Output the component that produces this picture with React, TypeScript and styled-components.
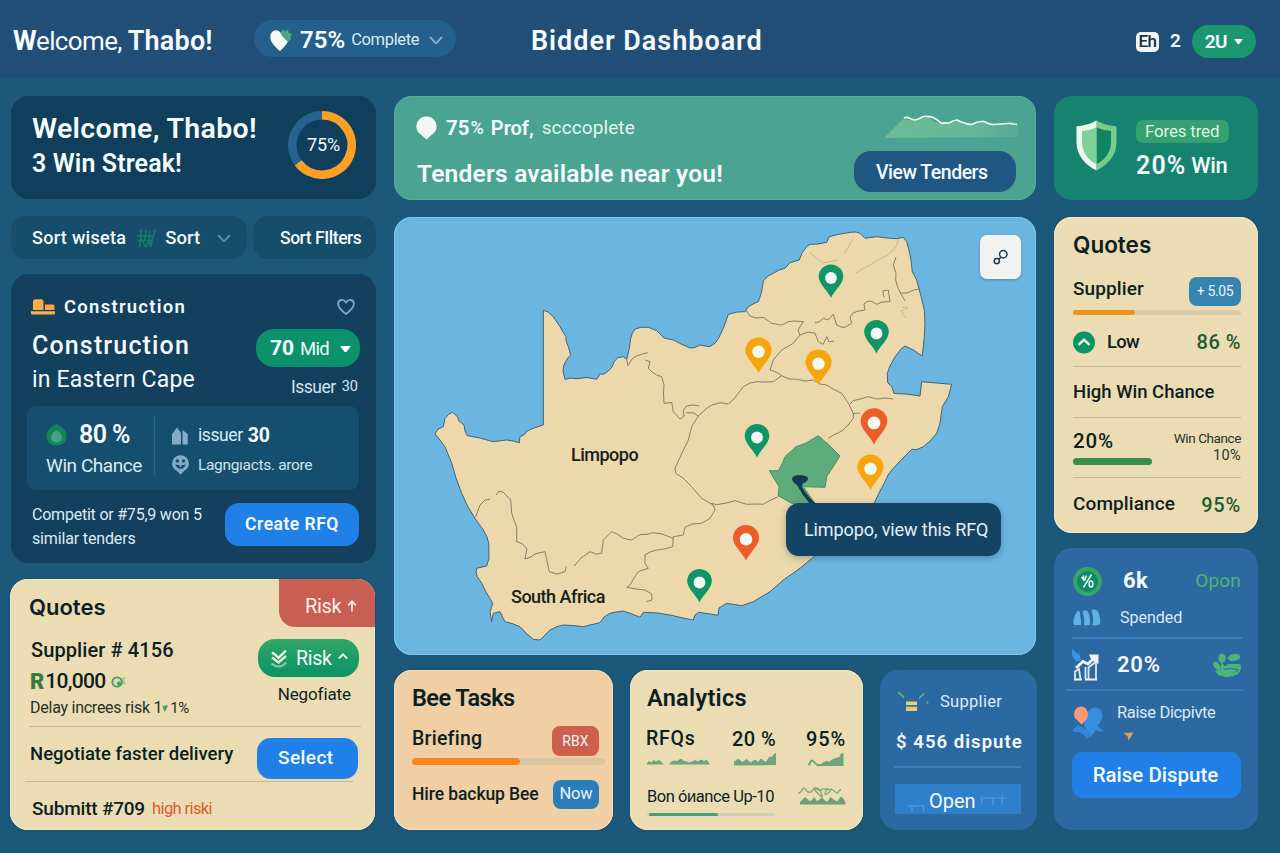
import React from "react";
import styled, { createGlobalStyle, css } from "styled-components";

const color = {
  page: "#1b587a",
  ink: "#0d1f22",
  white: "#f4fafd",
  soft: "#cfe2ee",
  cream: "#ecdcb3",
  rule: "#c3b995",
  blue: "#2080e8",
};

const GlobalStyle = createGlobalStyle`
  * { box-sizing: border-box; }
  html, body { margin: 0; padding: 0; }
  body { width: 1280px; height: 853px; overflow: hidden; background: ${color.page};
    font-family: Roboto, "Liberation Sans", sans-serif; color: ${color.white}; }
  button { font: inherit; border: 0; padding: 0; color: inherit; }
  svg { display: block; flex: none; }
`;

/* ---------- text ---------- */

type TextProps = { $size: number; $weight?: number; $track?: number; $tone?: string; $left?: number };

const Text = styled.span<TextProps>`
  display: block;
  flex: none;
  white-space: pre;
  font-size: ${(p) => p.$size}px;
  line-height: 1.2;
  font-weight: ${(p) => p.$weight ?? 400};
  letter-spacing: ${(p) => p.$track ?? 0}px;
  margin-left: ${(p) => p.$left ?? 0}px;
  ${(p) => p.$tone && css`color: ${p.$tone};`}
`;

const CardTitle = styled.h2<{ $track?: number; $size?: number; $face?: string }>`
  margin: 0;
  font-family: ${(p) => p.$face ?? "Roboto"}, sans-serif;
  font-size: ${(p) => p.$size ?? 23.5}px;
  line-height: 28px;
  font-weight: 600;
  letter-spacing: ${(p) => p.$track ?? 0}px;
  color: ${color.ink};
`;

/* ---------- page frame ---------- */

const Page = styled.div`
  width: 1280px;
  height: 853px;
  display: flex;
  flex-direction: column;
  background: ${color.page};
`;

const Header = styled.header`
  height: 78px;
  flex: none;
  display: grid;
  grid-template-columns: 254px 277px 605px 1fr;
  align-items: center;
  padding: 5px 0 0;
  background: linear-gradient(#224f76, #204e78);
`;

const Greeting = styled.div`
  display: flex;
  align-items: center;
  padding-left: 13px;
`;

const ProgressPill = styled.button`
  width: 202px;
  height: 37px;
  margin-top: -6px;
  border-radius: 19px;
  background: #25608c;
  display: flex;
  align-items: center;
  padding: 3px 0 0 16px;
`;

const HeaderTools = styled.div`
  display: flex;
  align-items: center;
`;

const LanguageBadge = styled.div`
  width: 23px;
  height: 20px;
  border-radius: 5px;
  background: #f2f6f7;
  display: flex;
  align-items: center;
  justify-content: center;
  color: #17303a;
`;

const AccountPill = styled.button`
  width: 64px;
  height: 33px;
  margin-left: 11px;
  border-radius: 17px;
  background: #1b9671;
  display: flex;
  align-items: center;
  padding: 1px 0 0 13px;
`;

const Board = styled.main`
  display: grid;
  grid-template-columns: 365px 642px 204px;
  column-gap: 18px;
  padding: 18px 0 0 11px;
`;

const Column = styled.div`
  display: flex;
  flex-direction: column;
  height: 734px;
`;

const Card = styled.section`
  flex: none;
  border-radius: 18px;
  position: relative;
  overflow: hidden;
  display: flex;
  flex-direction: column;
`;

const CreamCard = styled(Card)`
  background: ${color.cream};
  color: ${color.ink};
  box-shadow: inset 0 0 0 1px #f3e7c6, 0 0 2px #0f4560;
`;

const Row = styled.div<{ $height: number; $top?: number; $left?: number }>`
  flex: none;
  display: flex;
  align-items: center;
  height: ${(p) => p.$height}px;
  margin-top: ${(p) => p.$top ?? 0}px;
  padding-left: ${(p) => p.$left ?? 0}px;
`;

const Rule = styled.hr<{ $tone?: string; $width?: number; $top?: number; $left?: number; $thick?: number }>`
  flex: none;
  border: 0;
  height: ${(p) => p.$thick ?? 1}px;
  width: ${(p) => p.$width ?? 168}px;
  margin: ${(p) => p.$top ?? 0}px 0 0 ${(p) => p.$left ?? 0}px;
  background: ${(p) => p.$tone ?? color.rule};
`;

const Push = styled.span`
  flex: 1;
`;

const Gap = styled.span<{ $width: number }>`
  flex: none;
  width: ${(p) => p.$width}px;
`;

const Track = styled.div<{ $width: number; $height: number; $top?: number; $tone: string }>`
  flex: none;
  width: ${(p) => p.$width}px;
  height: ${(p) => p.$height}px;
  margin-top: ${(p) => p.$top ?? 0}px;
  border-radius: 4px;
  background: ${(p) => p.$tone};
`;

const Fill = styled.div<{ $width: number; $tone: string; $left?: number }>`
  width: ${(p) => p.$width}px;
  margin-left: ${(p) => p.$left ?? 0}px;
  height: 100%;
  border-radius: 4px;
  background: ${(p) => p.$tone};
`;

/* ---------- left column ---------- */

const StreakCard = styled(Card)`
  height: 103px;
  background: #0f3f5a;
  flex-direction: row;
  padding: 17px 20px 0 21px;
  justify-content: space-between;
`;

const StreakText = styled.div`
  display: flex;
  flex-direction: column;
`;

const DonutBox = styled.div`
  width: 68px;
  height: 68px;
  margin-top: -2px;
  display: grid;
  place-items: center;
  & > * { grid-area: 1 / 1; }
`;

const FilterBar = styled.div`
  display: flex;
  gap: 6px;
  height: 43px;
  margin-top: 17px;
`;

const FilterGroup = styled.div<{ $width: number; $pad: number }>`
  width: ${(p) => p.$width}px;
  border-radius: 15px;
  background: #164d6b;
  display: flex;
  align-items: center;
  padding: 1px 0 0 ${(p) => p.$pad}px;
`;

const TenderCard = styled(Card)`
  height: 289px;
  margin-top: 15px;
  background: #12405d;
  padding: 20px 17px 0 16px;
`;

const TenderHead = styled.div`
  flex: none;
  display: flex;
  justify-content: space-between;
  height: 86px;
  padding-left: 5px;
`;

const TenderName = styled.div`
  display: flex;
  flex-direction: column;
  padding-top: 9px;
`;

const TenderSide = styled.div`
  display: flex;
  flex-direction: column;
  align-items: flex-end;
`;

const BudgetPill = styled.button`
  width: 104px;
  height: 38px;
  margin-top: 9px;
  margin-right: -1px;
  border-radius: 18px;
  background: #0c926a;
  display: flex;
  align-items: center;
  padding: 2px 0 0 13px;
`;

const ChancePanel = styled.div`
  flex: none;
  width: 332px;
  height: 84px;
  border-radius: 9px;
  background: #164e70;
  display: flex;
`;

const ChanceMain = styled.div`
  width: 128px;
  height: 60px;
  margin-top: 9px;
  border-right: 1px solid #2c6687;
  padding-left: 19px;
`;

const ChanceFacts = styled.div`
  padding: 16px 0 0 17px;
`;

const TenderFoot = styled.div`
  display: flex;
  justify-content: space-between;
  margin-top: 13px;
  padding-left: 5px;
`;

const ActionButton = styled.button<{ $width: number; $height: number; $radius?: number }>`
  flex: none;
  width: ${(p) => p.$width}px;
  height: ${(p) => p.$height}px;
  border-radius: ${(p) => p.$radius ?? 14}px;
  background: ${color.blue};
  color: ${color.white};
  display: flex;
  align-items: center;
  justify-content: center;
`;

const QuotesCard = styled(CreamCard)`
  height: 251px;
  width: 365px;
  margin: 16px 0 0 -1px;
`;

const QuotesHead = styled.div`
  flex: none;
  display: flex;
  justify-content: space-between;
  padding-left: 19px;
  height: 48px;
`;

const RiskTag = styled.div`
  width: 96px;
  height: 48px;
  border-bottom-left-radius: 16px;
  background: #c95e52;
  display: flex;
  align-items: center;
  padding: 6px 0 0 26px;
  color: #fbeee6;
`;

const QuoteBody = styled.div`
  flex: none;
  display: flex;
  justify-content: space-between;
  padding: 0 16px 0 20px;
  height: 99px;
`;

const QuoteLines = styled.div`
  padding-top: 9px;
`;

const QuoteSide = styled.div`
  display: flex;
  flex-direction: column;
  align-items: flex-end;
  padding-top: 12px;
`;

const RiskPill = styled.button`
  width: 101px;
  height: 38px;
  border-radius: 17px;
  background: linear-gradient(#2fa766, #0a9365);
  display: flex;
  align-items: center;
  padding: 2px 0 0 13px;
  color: ${color.white};
`;

/* ---------- centre column ---------- */

const Banner = styled(Card)`
  height: 104px;
  background: #4ba392;
  box-shadow: inset 0 0 0 1px #57aa98;
  flex-direction: row;
  justify-content: space-between;
  padding: 0 20px 0 22px;
`;

const BannerSide = styled.div`
  display: flex;
  flex-direction: column;
  align-items: flex-end;
  padding-top: 17px;
`;

const TendersButton = styled.button`
  width: 162px;
  height: 41px;
  margin-top: 11px;
  border-radius: 17px;
  background: #1f5682;
  display: flex;
  align-items: center;
  padding: 2px 0 0 22px;
`;

const MapCard = styled(Card)`
  height: 438px;
  margin-top: 17px;
  background: #6bb6e0;
  box-shadow: inset 0 0 0 1px #7fc3e8;
`;

const MapButton = styled.button`
  position: absolute;
  right: 15px;
  top: 18px;
  width: 41px;
  height: 44px;
  border-radius: 7px;
  background: #f2f2f0;
  display: grid;
  place-items: center;
  box-shadow: 0 1px 3px rgba(20, 70, 110, 0.4);
`;

const MapTooltip = styled.div`
  position: absolute;
  left: 392px;
  top: 286px;
  width: 215px;
  height: 53px;
  border-radius: 13px;
  background: #144465;
  display: flex;
  align-items: center;
  padding: 1px 0 0 18px;
  box-shadow: 0 2px 7px rgba(20, 50, 80, 0.35);
`;

const BottomRow = styled.div`
  display: grid;
  grid-template-columns: 219px 233px 157px;
  column-gap: 17px;
  margin-top: 15px;
  height: 160px;
`;

const TasksCard = styled(CreamCard)`
  background: #efcfa3;
  box-shadow: inset 0 0 0 1px #f5dfbc, 0 0 2px #0f4560;
  padding: 14px 8px 0 18px;
`;

const AnalyticsCard = styled(CreamCard)`
  padding: 14px 16px 0 17px;
`;

const SupplierCard = styled(Card)`
  background: #2b69a3;
  padding: 17px 14px 0 15px;
`;

const Chip = styled.span<{ $width: number; $height: number; $tone: string }>`
  flex: none;
  width: ${(p) => p.$width}px;
  height: ${(p) => p.$height}px;
  border-radius: 8px;
  background: ${(p) => p.$tone};
  display: flex;
  align-items: center;
  justify-content: center;
  color: #e9f3f8;
`;

const Metrics = styled.div`
  display: grid;
  grid-template-columns: 86px 74px 1fr;
`;

const OpenButton = styled.button`
  width: 126px;
  height: 30px;
  margin-top: 16px;
  background: #307fcb;
  display: flex;
  align-items: center;
  padding: 3px 0 0 13px;
`;

/* ---------- right column ---------- */

const WinCard = styled(Card)`
  height: 104px;
  background: #168370;
  flex-direction: row;
  padding: 24px 0 0 22px;
`;

const WinText = styled.div`
  margin-left: 19px;
`;

const ForecastTag = styled.div`
  width: 93px;
  height: 23px;
  border-radius: 7px;
  background: #35a070;
  display: flex;
  align-items: center;
  padding-left: 9px;
`;

const StatsCard = styled(CreamCard)`
  height: 316px;
  margin-top: 17px;
  padding: 13px 17px 0 19px;
`;

const WinChanceNote = styled.div`
  display: flex;
  flex-direction: column;
  align-items: flex-end;
  gap: 1px;
  padding-top: 4px;
`;

const DisputeCard = styled(Card)`
  height: 282px;
  margin-top: 15px;
  background: #2c69a3;
  padding: 18px 17px 0 18px;
`;

/* ---------- drawings ---------- */

const Chevron = ({ tone = "#8fb3cc", size = 14 }: { tone?: string; size?: number }) => (
  <svg width={size} height={size * 0.64} viewBox="0 0 14 9" fill="none" stroke={tone} strokeWidth="1.9">
    <path d="M1 1l6 6.6L13 1" />
  </svg>
);

const Caret = ({ size = 10 }: { size?: number }) => (
  <svg width={size} height={size * 0.6} viewBox="0 0 10 6" fill="#f4fafd">
    <path d="M1 0h8q1 0 .4.8L5.8 5.5q-.8.9-1.6 0L.6.8Q0 0 1 0z" />
  </svg>
);

const ChevronUp = () => (
  <svg width="10" height="12" viewBox="0 0 10 12" fill="none" stroke="#eaf6ee" strokeWidth="1.8">
    <path d="M.8 5.5L5 1.3l4.2 4.2" />
  </svg>
);

const LeafHeart = () => (
  <svg width="22" height="23" viewBox="0 0 22 23">
    <path d="M10 22C5 18 0 13 .3 7.500C.6 3 4 .8 7.500 1.400C9 1.700 10 3 11 4.500L18.500 11.500C17 15 13.500 19 10 22z" fill="#f4f7f5" />
    <path d="M10.500 3.200l2.400-2.400 1.900 1.600L18 .8l.8 3.200 3 .4-1.300 3 .3 3-3.300 2.300L12 7z" fill="#4fa67e" />
  </svg>
);

const Donut = () => (
  <svg width="68" height="68" viewBox="-34 -34 68 68" fill="none" strokeWidth="8.6">
    <circle r="29.7" stroke="#2a628f" />
    <path d="M0-29.700A29.700 29.700 0 1 1-23.700 17.900" stroke="#fba024" />
  </svg>
);

const WonMark = () => (
  <svg width="19" height="21" viewBox="0 0 19 21" fill="none" stroke="#167b68" strokeWidth="1.7">
    <path d="M4 1L3 19M9 2L7.500 13M3.500 10l5.500 9 3-7 1.500 7L18 1M12.500 3v9M0 8h17M1 12.500h15" />
  </svg>
);

const Bricks = () => (
  <svg width="24" height="16" viewBox="0 0 24 16">
    <path d="M0 12.200h24v2.300q0 1-1 1H1q-1 0-1-1z" fill="#f7b35c" />
    <path d="M2 2.500Q2 .3 5 .3h5q2.500 0 2.500 2.200v8.500H2z" fill="#fbac45" />
    <path d="M14 5.500h8q1.500 0 1.500 1.500v4H14z" fill="#f7a53e" />
  </svg>
);

const HeartOutline = () => (
  <svg width="18" height="18" viewBox="0 0 19 18" fill="none" stroke="#7fa3bd" strokeWidth="2" strokeLinejoin="round">
    <path d="M9.500 16.500C5 13 1.200 9.600 1.200 5.600 1.200 1 7 0 9.500 4.200 12 0 17.800 1 17.800 5.600c0 4-3.800 7.400-8.300 10.900z" />
  </svg>
);

const Sprout = () => (
  <svg width="21" height="22" viewBox="0 0 21 22">
    <path d="M10.500 0C15 1.500 20.500 6 20.500 12.500c0 5.500-4 9-10 9S.5 18 .5 12.500C.5 6 6 1.500 10.500 0z" fill="#148459" />
    <path d="M10.500 6.500c3 1 5.300 3.500 5.300 7 0 3.200-2.200 5-5.300 5s-5.300-1.800-5.300-5c0-3.500 2.300-6 5.300-7z" fill="#45a384" />
  </svg>
);

const Towers = () => (
  <svg width="17" height="18" viewBox="0 0 17 18" fill="#83abc8">
    <path d="M0 17.500V7L5 .5 9 6v11.500z" />
    <path d="M10.500 17.500V3L15 6.500q.8.600.8 2v9z" />
  </svg>
);

const FacePin = () => (
  <svg width="17" height="20" viewBox="0 0 18 21">
    <path d="M9 20.500L5 16.700C2 15.200 0 12.300 0 9a9 8.800 0 0 1 18 0c0 3.300-2 6.200-5 7.700z" fill="#83abc8" />
    <g fill="#164e70">
      <circle cx="5.700" cy="6.200" r="1.900" />
      <circle cx="12.200" cy="6.200" r="1.900" />
      <path d="M3.600 9.800Q9 11.800 14.400 9.800 13.400 14.500 9 14.600 4.600 14.500 3.600 9.800z" />
    </g>
    <path d="M9 3v9.500" stroke="#83abc8" strokeWidth="1.5" />
  </svg>
);

const ArrowUp = () => (
  <svg width="10" height="12" viewBox="0 0 10 12" fill="none" stroke="#fbeee6" strokeWidth="1.7">
    <path d="M5 11.500V1.500M1 5.500L5 1.300l4 4.200" />
  </svg>
);

const DoubleTick = () => (
  <svg width="16" height="20" viewBox="0 0 16 20" fill="none" strokeWidth="2.4">
    <path d="M1 3.500l3.500 2.500 3 2.800 7.500-7.300" stroke="#f1f8ee" />
    <path d="M1 8.500l6.500 5 7.500-6.500" stroke="#e0f0dd" />
    <path d="M.5 14.500q7.500 6.500 15-1" stroke="#84cc9e" strokeWidth="2" />
  </svg>
);

const CoinDot = () => (
  <svg width="16" height="12" viewBox="0 0 16 12">
    <path d="M9 2l6-1-2 4 2 3-5 1z" fill="#9ccb9c" />
    <circle cx="6" cy="6" r="4.700" fill="#d7dcb6" stroke="#4f9a63" strokeWidth="1.8" />
    <circle cx="8" cy="7.500" r="2" fill="#4f9a63" />
  </svg>
);

const MiniLeaf = () => (
  <svg width="6" height="8" viewBox="0 0 6 8">
    <path d="M.3 1.500L2.500 2l3-1.500Q6 4 2.500 7.700 1 5 .3 1.500z" fill="#4f9a63" />
  </svg>
);

const Balloon = () => (
  <svg width="21" height="24" viewBox="0 0 21 24">
    <path d="M10.500 23.500L5.500 19C2 17 .3 13.800.3 10.300a10.200 10 0 0 1 20.400 0c0 3.500-1.700 6.700-5.200 8.700z" fill="#f4f6f3" />
  </svg>
);

const BannerSpark = () => (
  <svg width="132" height="27" viewBox="0 0 132 27" overflow="visible">
    <defs>
      <linearGradient id="spark" x1="0" x2="1">
        <stop offset="0" stopColor="#6fbb96" />
        <stop offset=".65" stopColor="#66b698" />
        <stop offset="1" stopColor="#55aa95" />
      </linearGradient>
    </defs>
    <path d="M0 25L19 6q7 2 12 1 6-4 14-2 6 5 12 5 9 0 14-3 8 3 17 4 9-4 17-2 9 3 16 1 8-2 13 0v14z" fill="url(#spark)" />
    <path d="M20 5q3-1.500 6 .500 4 2 7 1t6-3q5-.500 9 .500 5 2 9 6 5 .500 9-.500 4-2.500 7-2.500 3 1.500 6 2.500 6 2.500 10 1.500 4-2.500 8-2.500 4-.500 6 1.500 4 2 8 1.500l12-1q4-.500 6 .500l4 .500" fill="none" stroke="#eafaf0" strokeWidth="1.7" strokeLinejoin="round" />
  </svg>
);

const Shield = () => (
  <svg width="41" height="51" viewBox="0 0 41 51">
    <path d="M20.500.5Q28 5 40.500 6.500V22C40.500 35 32 45 20.500 50.500z" fill="#74cc8d" />
    <path d="M20.500.5Q13 5 .5 6.500V22C.5 35 9 45 20.500 50.500z" fill="#eef7ee" />
    <path d="M20.500 7.500Q27 10.500 35 11V22c0 9-5 17.500-14.500 22z" fill="#118463" />
    <path d="M20.500 7.500Q14 10.500 6 11V22c0 9 5 17.500 14.500 22z" fill="#7bd196" />
  </svg>
);

const UpBadge = () => (
  <svg width="22" height="23" viewBox="0 0 22 23">
    <circle cx="11" cy="11.500" r="11" fill="#0b9465" />
    <path d="M5.500 13.800L11 8.600l5.500 5.200" fill="none" stroke="#effaf3" strokeWidth="2.3" />
  </svg>
);

const CoinBadge = () => (
  <svg width="30" height="31" viewBox="0 0 30 31">
    <circle cx="14.500" cy="15.500" r="14.400" fill="#36a568" />
    <circle cx="14.500" cy="15.500" r="10.400" fill="#0b8b66" />
    <g fill="none" stroke="#f0faf4" strokeWidth="1.5">
      <path d="M10.500 21.500l8-13M8.500 11l2 2.500v-4M13.500 9.500l-2 5" />
      <ellipse cx="18" cy="18" rx="1.900" ry="3" />
    </g>
  </svg>
);

const Feathers = () => (
  <svg width="28" height="17" viewBox="0 0 28 17" fill="#62b0e2">
    <path d="M1 16Q-1 9 5 1.500q2.500 1 2.300 6 1 4 .5 8.500z" />
    <path d="M11 16.500q1-7-1.300-14Q13 0 15 3q2.500 5 2 13z" />
    <path d="M19.500 16.300q1.500-8-1-15.300Q21-1 24.500 2q4 6 2.300 13.500-3 1.500-7.300.8z" />
  </svg>
);

const GrowthChart = () => (
  <svg width="27" height="32" viewBox="0 0 27 32">
    <path d="M0 0l6 5 1-1 2 7-4 2-5-6z" fill="#3d93de" />
    <path d="M4 19l7-6.500 5 2.500 7-7" fill="none" stroke="#f2f4ef" strokeWidth="3" />
    <path d="M17 5.500h9.500V15l-4-2-4-4z" fill="#f2f4ef" />
    <path d="M3 30.500v-8l4-2.500 1.500 10.500M13.500 30V18M16.500 30V18.500l7.500-6V30" fill="none" stroke="#dbe9f0" strokeWidth="1.8" />
    <path d="M2 30.500h8M13 30.500h12" stroke="#f2f4ef" strokeWidth="1.8" />
  </svg>
);

const Plant = () => (
  <svg width="28" height="25" viewBox="0 0 28 25" fill="#4db37a">
    <ellipse cx="9" cy="5" rx="3.800" ry="4.600" />
    <ellipse cx="21" cy="4.500" rx="6.300" ry="3.500" transform="rotate(-10 21 4.500)" />
    <ellipse cx="4" cy="13" rx="2.800" ry="5" transform="rotate(-38 4 13)" />
    <path d="M8 8l3.500 5h1Q14 11 17 11h9q2 0 2 2.500 0 5-3 7.500-8 4.500-15 2.500-6-1-8-6l6-.5z" />
    <path d="M11 16.500q7-1.500 14 0l-2 2.500" stroke="#2c69a3" strokeWidth="1.2" fill="none" />
  </svg>
);

const Balloons = () => (
  <svg width="32" height="33" viewBox="0 0 32 33">
    <path d="M0 24l6-5 7 4 8-5 5 2 6 5-5 1-3-2-5 7-1-1-3 3-3-4-5-3-5 0z" fill="#3387d8" />
    <path d="M20 29l-8-9C13 10 16 1.500 23.500 1.500c4.500 0 7 4 7 8.500 0 5-5 9-6 12z" fill="#3490df" />
    <path d="M9.500 18.500L5 14C2.500 12 2 9.500 2 8A7 7.500 0 0 1 16 8c0 5-3 7.500-6.500 10.500z" fill="#fc9775" />
  </svg>
);

const OrangeDart = () => (
  <svg width="11" height="9" viewBox="0 0 11 9">
    <path d="M.5 1L10.500.5 5.500 8.500 4.500 4z" fill="#e5a04b" />
  </svg>
);

const Lantern = () => (
  <svg width="32" height="22" viewBox="0 0 32 22">
    <path d="M1 1l6 5.500M22 7.500l5-5M30 12.500l1-2" stroke="#59b27e" strokeWidth="1.7" />
    <rect x="9" y="10.500" width="11" height="3.600" fill="#ded772" />
    <rect x="9" y="15.700" width="11" height="4.300" fill="#e8c677" />
  </svg>
);

const OpenMarks = () => (
  <svg width="28" height="11" viewBox="0 0 28 11" fill="none" stroke="#5797d6" strokeWidth="1.2">
    <path d="M.6 9V3h25M12 3v7M21 0v9" />
  </svg>
);

const LeftMarks = () => (
  <svg width="18" height="7" viewBox="0 0 18 7" fill="none" stroke="#5797d6" strokeWidth="1.2">
    <path d="M0 1h15.500v6M4 1v6" />
  </svg>
);

const Scribble = ({ width, height, d }: { width: number; height: number; d: string }) => (
  <svg width={width} height={height} viewBox={`0 0 ${width} ${height}`} fill="#6fa37c">
    <path d={d} />
  </svg>
);

const WavePair = () => (
  <svg width="49" height="19" viewBox="0 0 49 19">
    <path d="M2 18.500v-2.500l5-5 2.500 2 2 2 2.500-1 2-3 3 4 2-1 3-3 3 4 2.500.500 3-4.500 4 3 2.500 1.500 4-5 2.500 2 2 4v2z" fill="#6f9f79" />
    <path d="M0 7q3 0 4.500-4Q6 1 8 4t5 2q3-4 5-4t4 2-3.500-1 1 4 4 1 3-5 4 0-3 3 2 1.500 3-4 3.500 1.500 4 1.500 3-3" fill="none" stroke="#82a983" strokeWidth="1.4" />
  </svg>
);

const LinkDots = () => (
  <svg width="16" height="16" viewBox="0 0 16 16" fill="none" stroke="#1d3d55" strokeWidth="1.5">
    <circle cx="10.300" cy="5.200" r="3.700" />
    <circle cx="3.800" cy="12" r="2.600" />
    <path d="M5.800 10.200l2-2" />
  </svg>
);

/* ---------- map ---------- */

const COAST =
  "543.3,310.3 548,312 553.3,316.7 560,326.7 563,332 566,336.7 566,341 568.3,346.7 570.7,355 567,359 564,365 563,370.7 565,379.5 570,378 576.7,378.7 587,377.5 596.7,379.3 600,374 604,374 608.3,371 612,367 614,362 617.7,357.7 623.3,356.7 626.7,359.3 629.3,348.3 630.5,339 632.3,333.3 635,329 641,327.3 648.3,327.3 656.7,330.7 660,334 664,338 673.3,340 681,344 690,348 695,347.5 700,345 705,346 710,346.5 715,343.3 718.5,338.5 724,326.7 728.3,314.3 737,312 745,311.7 748.3,306.7 753,304 758.3,301.7 761.7,291.7 763.3,281 768,276 773.3,273.3 779,270 785,268.3 790,262.7 799.3,260 802,253 806.7,246.7 810,244.3 818,244 826.7,242.3 829.3,236.7 838.3,234.3 850,232.3 856,232 860,233.3 865,238.3 876.7,236.7 887,238 896.7,238.7 903.3,237.3 906.7,241.7 909,250 911,260 912.3,271.7 916.7,280 920.7,295 924.3,310 925,323 924.3,336.7 922.3,356 913.3,350 905,346 900.7,349.3 895,357 890,366 887.3,373.3 887.7,382.7 891.7,386.7 894,393.5 906,394 920,396 921.7,381.7 951.7,384.3 948.3,396.7 942.3,406.7 940,423.3 936.7,433.3 930,441 923.3,446.7 917,449.5 911.7,449.3 902,459 893.3,468.3 888,475 885,481.7 879,493 873.3,505 850,530 814,556.7 800,568.3 783.3,580 770,591.7 753.3,601.7 741.7,605.7 726.7,603.3 719,608 718,615.3 707,613.5 698.3,612.3 695,615 693.3,620 683,618 673.3,615.7 658,613 643.3,612.3 640,617.3 632,614 623.3,611 616,612 610,613.3 604,617 600,622.7 592,624.5 583.3,626.7 573,625.5 563.3,625 556,627 550,630 545,635 540,640 533.3,639.3 527,634 520,626.7 512,623.5 505,621.7 502,616 500,611.7 493.3,613.3 491.7,621.7 490,611.7 492.7,603.3 486,592 481.7,583.3 477.3,576.7 476,572 476.7,568.3 486.7,566 489,558.3 488.7,543.3 487,537 483.3,530 475,518.3 468,507 461.7,493.3 456,478 451.7,463.3 445,446.7 440,440 435,434 438,429 443.3,426.7 445,418.3 449,414 452.7,412.3 457.3,416.7 459,421 464,425 465,431 467.3,435.7 480,438 493.3,441.7 506.7,440 513,441 519.5,442.7 519.8,437 525,434 527,431 533.3,428.3 543.3,425";

const BORDERS = [
  "626.7,359 628,365.7 632,359 636.7,355.7 647.7,352.7",
  "645,360 650,361.7 648.3,368.3 652,372 656.7,375 661.7,376.7 664,385 663.5,394 664,403.3 671.7,402.5 673.3,411.7 680,419 684,416 683.3,410 686.7,406 693,405 699.3,406",
  "686.7,412.7 694,413 698.3,416 691.7,426.7 688.3,440 682,453 675,468.3 675.7,473.3 683,478 690,485 701.7,498.3 708,502 713.3,505 715,510 710,518.3 701.7,523.3 692,524 685,527.3 683.3,535 673.3,536.7 672.7,546.7 664,549 656.7,550 650,552 645,555 645,563.3 648.3,568.3 638.3,571.7 634,578 630,585 626.7,587.3 636,589 645,590 651.7,594 652,600 646.7,601.7",
  "698.3,416 706.7,408.3 712,405 720,402.7 728.3,404 734,399 743.3,386.7 750,383 756.7,381.7 765,382 773.3,381.7 781.7,375.7 776,372 770,370 773.3,360 781.7,350 793.3,343.3 800,335 798,330 803.3,321.7 795,321 788.3,321.7 781.7,325 771.7,323.3 763.3,317.3 756,318 750,316 745.7,310",
  "781.7,375.7 789,379 796.7,379.3 805,381 813.3,380 820,384 826.7,385 833,389 841.7,393.3 848.3,403.3 853.3,413.3 853.3,418.3 849,424 843.3,430 838,433 833.3,435 828.3,438.3",
  "850,404 853.3,400.7 860,399 868.3,396.7 876.7,399 885,398 893.3,399",
  "853,413.5 860,413",
  "800,335 808,332 815,333.3 818.3,341.7 823,344.5 827,336.7 829,342 834,341",
  "815,322.7 819,322 823.3,318.3 828,320 833.3,314.3 836.7,325 841,327 845,327.3 851.7,323.3 850,317 853.3,312.7 859,311 865,310 864,304 866.7,301.7 871,301 876.7,304.3 882,302 890,301.7 888.3,290 882.7,291 884,297",
  "896,257 893.3,265 896,273.3 895.7,280 898,288 901,294 905,300.7",
  "900,293 907,293 913.3,290 919.3,289.3",
  "710,503.3 717,504.5 725,503.3 735,500.7 746.7,504.3 755,504 763.3,504.3 771,500 778.3,496.7",
  "475.7,516.7 480,505 485,500 490,499.3",
  "496,495 499,491 503,492 510.7,500 511.7,513.3 514,520 516.7,526.7 516.7,541.7 522,543.5 527,549 525,559 531,557 536,553.5 545,551.7 549.3,571.7 557,574 565,571.7 566,566.7",
  "574,566 581,558 590,551.7 596,554 601.7,553.3 603.3,540 611.7,531.7 617,534 623.3,538.3 631.7,540 640,534.5 646,534.5 653.3,532.7 662,534 673.3,538.3",
];

const PROVINCE =
  "818.3,435.7 829,445 840,456 833,467 826.7,476.7 825,487.3 803.3,486.7 815,503.3 800,505 791.7,503.3 778.3,495.7 779,486.7 769.3,470.7 778.3,470.7 782,464 785,456.7 796,446.7 806,443";

const PINS: { x: number; y: number; tone: string; k?: number }[] = [
  { x: 831, y: 298, tone: "#0f9566" },
  { x: 876.5, y: 353.5, tone: "#0f9566" },
  { x: 757, y: 457.5, tone: "#0f9566" },
  { x: 699.5, y: 602.5, tone: "#0f9566" },
  { x: 758.5, y: 373, tone: "#f6a50b", k: 1.06 },
  { x: 818.5, y: 385, tone: "#f6a50b", k: 1.06 },
  { x: 870.5, y: 490, tone: "#f6a50b", k: 1.06 },
  { x: 874, y: 444.5, tone: "#ec5d29", k: 1.08 },
  { x: 746, y: 560.5, tone: "#ec5d29", k: 1.06 },
];

const MapLabel = styled.text`
  font-size: 18px;
  font-weight: 500;
  letter-spacing: -0.5px;
  fill: #14211f;
`;

const TenderMap = () => (
  <svg width="642" height="438" viewBox="394 217 642 438">
    <polygon points={COAST} fill="#edd8ab" stroke="#3f6474" strokeWidth="1" strokeLinejoin="round" />
    <g fill="none" stroke="#76775f" strokeWidth=".9" strokeLinejoin="round">
      {BORDERS.map((points) => (
        <polyline key={points} points={points} />
      ))}
    </g>
    <g fill="none" stroke="#c9b78e" strokeWidth="1">
      <path d="M810 253l13 10 15-3M853 239l-9 15M898 239q0 12-18 20l-24 14M902 307l6 1-7 3 5 7" />
    </g>
    <polygon points={PROVINCE} fill="#5cad79" stroke="#47856a" strokeWidth=".9" />
    <path d="M792 479q0-4 9-4 8 1 7 4-1 3-5 4l-1 4q5 9 14 17h-6Q802 495 797 485q-4-2-5-6z" fill="#133a52" />
    {PINS.map((pin) => (
      <g key={`${pin.x}-${pin.y}`} transform={`translate(${pin.x} ${pin.y}) scale(${pin.k ?? 1})`}>
        <path d="M0 0C-3-7-12.300-14-12.300-21.500a12.300 12 0 0 1 24.600 0C12.300-14 3-7 0 0z" fill={pin.tone} />
        <circle cy="-20" r="5.900" fill="#f4f8f3" />
      </g>
    ))}
    <MapLabel x="571" y="460.5">Limpopo</MapLabel>
    <MapLabel x="511" y="603">South Africa</MapLabel>
  </svg>
);

/* ---------- page ---------- */

export default function App() {
  return (
    <Page>
      <GlobalStyle />
      <Header>
        <Greeting>
          <Text $size={27} $weight={700} $track={-0.6}>W</Text>
          <Text $size={26} $track={-0.65}>elcome,</Text>
          <Text $size={27} $weight={600} $track={0.2} $left={6}>Thabo!</Text>
        </Greeting>
        <ProgressPill>
          <LeafHeart />
          <Text $size={24} $weight={600} $left={8}>75%</Text>
          <Text $size={16.5} $track={-0.35} $left={6} $tone="#d9e9f4">Complete</Text>
          <Gap $width={10} />
          <Chevron tone="#86aecb" />
        </ProgressPill>
        <Text $size={27} $weight={600} $track={0.97}>Bidder Dashboard</Text>
        <HeaderTools>
          <LanguageBadge><Text $size={17} $weight={500} $track={-0.5}>Eh</Text></LanguageBadge>
          <Text $size={19} $weight={600} $left={11}>2</Text>
          <AccountPill>
            <Text $size={19} $weight={600} $track={-0.6}>2U</Text>
            <Gap $width={7} />
            <Caret size={9} />
          </AccountPill>
        </HeaderTools>
      </Header>

      <Board>
        <Column>
          <StreakCard>
            <StreakText>
              <Row $height={32}><Text $size={28.5} $weight={600} $track={0.33}>Welcome, Thabo!</Text></Row>
              <Row $height={32} $top={3}><Text $size={25} $weight={600} $track={0.12}>3 Win Streak!</Text></Row>
            </StreakText>
            <DonutBox>
              <Donut />
              <Text $size={18} $weight={400} $track={-0.2} $left={3}>75%</Text>
            </DonutBox>
          </StreakCard>

          <FilterBar>
            <FilterGroup $width={236} $pad={21}>
              <Text $size={18} $weight={500} $track={0.3}>Sort wiseta</Text>
              <Gap $width={11} />
              <WonMark />
              <Text $size={18.5} $weight={500} $left={9}>Sort</Text>
              <Gap $width={17} />
              <Chevron tone="#5d8dad" />
            </FilterGroup>
            <FilterGroup $width={123} $pad={27}>
              <Text $size={17.5} $weight={500} $track={-0.45}>Sort FIlters</Text>
            </FilterGroup>
          </FilterBar>

          <TenderCard>
            <Row $height={26} $left={4}>
              <Bricks />
              <Text $size={18.5} $weight={600} $track={1.25} $left={9}>Construction</Text>
              <Push />
              <HeartOutline />
              <Gap $width={4} />
            </Row>
            <TenderHead>
              <TenderName>
                <Row $height={34}><Text $size={25} $weight={500} $track={1.15}>Construction</Text></Row>
                <Row $height={34}><Text $size={23} $track={0.2}>in Eastern Cape</Text></Row>
              </TenderName>
              <TenderSide>
                <BudgetPill>
                  <Text $size={21} $weight={700} $left={1}>70</Text>
                  <Text $size={18.5} $track={-0.8} $left={6}>Mid</Text>
                  <Gap $width={11} />
                  <Caret size={11} />
                </BudgetPill>
                <Row $height={24} $top={8}>
                  <Text $size={17.5} $track={-0.5} $tone="#d5e4ee">Issuer</Text>
                  <Text $size={14.5} $left={6} $tone="#d5e4ee">30</Text>
                  <Gap $width={1} />
                </Row>
              </TenderSide>
            </TenderHead>
            <ChancePanel>
              <ChanceMain>
                <Row $height={40}>
                  <Sprout />
                  <Text $size={25} $weight={600} $track={-0.6} $left={12}>80 %</Text>
                </Row>
                <Row $height={22}><Text $size={19} $track={-0.45} $tone="#dcebf4">Win Chance</Text></Row>
              </ChanceMain>
              <ChanceFacts>
                <Row $height={27}>
                  <Towers />
                  <Text $size={17.5} $track={-0.4} $left={9} $tone="#dcebf4">issuer</Text>
                  <Text $size={19.5} $weight={700} $track={-0.2} $left={5}>30</Text>
                </Row>
                <Row $height={32}>
                  <FacePin />
                  <Text $size={15.5} $track={-0.33} $left={9} $tone={color.soft}>Lagngıacts. arore</Text>
                </Row>
              </ChanceFacts>
            </ChancePanel>
            <TenderFoot>
              <div>
                <Row $height={24}><Text $size={16} $track={-0.22} $tone="#dcebf4">Competit or #75,9 won 5</Text></Row>
                <Row $height={24}><Text $size={16} $track={-0.15} $tone="#dcebf4">similar tenders</Text></Row>
              </div>
              <ActionButton $width={134} $height={43}><Text $size={17.5} $weight={600} $track={0.5}>Create RFQ</Text></ActionButton>
            </TenderFoot>
          </TenderCard>

          <QuotesCard>
            <QuotesHead>
              <Row $height={28} $top={14}><CardTitle $size={22} $face="Inter">Quotes</CardTitle></Row>
              <RiskTag>
                <Text $size={20} $track={-0.3}>Risk</Text>
                <Gap $width={6} />
                <ArrowUp />
              </RiskTag>
            </QuotesHead>
            <QuoteBody>
              <QuoteLines>
                <Row $height={28} $left={1}><Text $size={20} $weight={500} $track={0.1}>Supplier # 4156</Text></Row>
                <Row $height={32} $top={2}>
                  <Text $size={22} $weight={900} $tone="#3c7a45">R</Text>
                  <Text $size={21} $weight={500} $track={-0.7} $left={1}>10,000</Text>
                  <Gap $width={5} />
                  <CoinDot />
                </Row>
                <Row $height={22} $top={-1}>
                  <Text $size={16} $track={-0.25} $tone="#24302d">Delay increes risk 1</Text>
                  <MiniLeaf />
                  <Text $size={15} $track={-0.4} $left={2} $tone="#24302d">1%</Text>
                </Row>
              </QuoteLines>
              <QuoteSide>
                <RiskPill>
                  <DoubleTick />
                  <Text $size={19.5} $track={-0.3} $left={9}>Risk</Text>
                  <Gap $width={6} />
                  <ChevronUp />
                </RiskPill>
                <Row $height={24} $top={5}><Text $size={17} $track={-0.1}>Negofiate</Text><Gap $width={8} /></Row>
              </QuoteSide>
            </QuoteBody>
            <Rule $width={332} $left={19} />
            <Row $height={54} $left={20}>
              <Text $size={18.5} $weight={500}>Negotiate faster delivery</Text>
              <Gap $width={24} />
              <Row $height={54} $top={8}><ActionButton $width={101} $height={41}><Text $size={19} $weight={500} $track={0.4} $left={-4}>Select</Text></ActionButton></Row>
            </Row>
            <Rule $width={328} $left={15} />
            <Row $height={46} $top={4} $left={22}>
              <Text $size={19} $weight={500} $track={-0.2}>Submitt #709</Text>
              <Text $size={16.5} $track={-0.6} $left={7} $tone="#dc5a34">high riski</Text>
            </Row>
          </QuotesCard>
        </Column>

        <Column>
          <Banner>
            <div>
              <Row $height={32} $top={16}>
                <Balloon />
                <Text $size={20.5} $weight={700} $left={9}>75</Text>
                <Text $size={18} $weight={500} $left={1}>%</Text>
                <Text $size={20} $weight={600} $left={7}>Prof,</Text>
                <Text $size={19} $track={0.1} $left={8} $tone="#e2f6ee">scccoplete</Text>
              </Row>
              <Row $height={34} $top={13} $left={1}>
                <Text $size={24.5} $weight={600} $track={0.23}>Tenders available near you!</Text>
              </Row>
            </div>
            <BannerSide>
              <BannerSpark />
              <TendersButton><Text $size={19.5} $weight={500} $track={-0.5}>View Tenders</Text></TendersButton>
            </BannerSide>
          </Banner>

          <MapCard>
            <TenderMap />
            <MapButton><LinkDots /></MapButton>
            <MapTooltip><Text $size={18} $track={-0.1} $tone="#e4eef5">Limpopo, view this RFQ</Text></MapTooltip>
          </MapCard>

          <BottomRow>
            <TasksCard>
              <CardTitle $track={-0.55}>Bee Tasks</CardTitle>
              <Row $height={32} $top={11}>
                <Text $size={19.5} $weight={500} $track={0.25}>Briefing</Text>
                <Push />
                <Row $height={32} $top={4}><Chip $width={47} $height={30} $tone="#cc604d"><Text $size={14} $track={0.2}>RBX</Text></Chip></Row>
                <Gap $width={6} />
              </Row>
              <Track $width={193} $height={7} $top={3} $tone="#dcc6a0"><Fill $width={108} $tone="#f58820" /></Track>
              <Row $height={30} $top={14}>
                <Text $size={17.5} $weight={500} $track={-0.08}>Hire backup Bee</Text>
                <Push />
                <Chip $width={46} $height={29} $tone="#2b7cba"><Text $size={16.5} $track={-0.2}>Now</Text></Chip>
                <Gap $width={6} />
              </Row>
            </TasksCard>

            <AnalyticsCard>
              <CardTitle $track={0.3}>Analytics</CardTitle>
              <Metrics>
                <div>
                  <Row $height={32} $top={11}><Text $size={19.5} $weight={500} $track={0.8} $left={-1}>RFQs</Text></Row>
                  <Row $height={14}><Scribble width={64} height={6} d="M-1 5.500l3-3.500 2.500 1.500 2-2.500 2.500 1.500 3-1.500 2 1.500 3 3zM22 5.500l2-2.500 3-1.500 3 .500 4-2.500 3 2.500 3 .500 2 1 3-1 3-1.500 3 1.500 3-2 3 1.500 3-1 3 4.500z" /></Row>
                </div>
                <div>
                  <Row $height={32} $top={11}><Text $size={20} $weight={500} $track={0.4} $left={-1}>20 %</Text></Row>
                  <Row $height={14} $top={-3}><Scribble width={43} height={13} d="M1 12.500v-4l4-2.500 2 1 2.500 2 4-3 4 3.500 4.500-3 3 2.500 3-3.500 5 3.500 3-5 3-.500 4-4.500v13z" /></Row>
                </div>
                <div>
                  <Row $height={32} $top={11}><Text $size={20} $weight={500} $track={0.9} $left={-1}>95%</Text></Row>
                  <Row $height={14} $top={-3}><Scribble width={38} height={13} d="M.5 12l3-5 2-.500 5 4.500 4 0 2-2 3-1 3 .500 3-2.500 5-1.500 2-.500 1-3 3-1v13H10l-5-4.500-2.500 4z" /></Row>
                </div>
              </Metrics>
              <Row $height={30} $top={13}>
                <Text $size={16.5} $track={-0.45}>Bon óᴎance Up-10</Text>
                <Push />
                <Row $height={30} $top={-4}><WavePair /></Row>
              </Row>
              <Track $width={128} $height={3} $top={1} $tone="#d5cfa9"><Fill $width={69} $left={2} $tone="#44a070" /></Track>
            </AnalyticsCard>

            <SupplierCard>
              <Row $height={30}>
                <Gap $width={2} />
                <Lantern />
                <Text $size={16.5} $track={0.3} $left={11} $tone="#dfecf6">Supplier</Text>
              </Row>
              <Row $height={28} $top={11} $left={1}><Text $size={18.5} $weight={600} $track={1.05}>$ 456 dispute</Text></Row>
              <Rule $width={127} $top={10} $left={-1} $thick={2} $tone="#3a7fbe" />
              <OpenButton>
                <Row $height={30} $top={15}><LeftMarks /></Row>
                <Text $size={20} $left={3}>Open</Text>
                <Gap $width={5} />
                <OpenMarks />
              </OpenButton>
            </SupplierCard>
          </BottomRow>
        </Column>

        <Column>
          <WinCard>
            <Shield />
            <WinText>
              <ForecastTag><Text $size={17} $track={-0.2} $tone="#dff5e6">Fores tred</Text></ForecastTag>
              <Row $height={32} $top={7}>
                <Text $size={25} $weight={600} $track={1.1}>20%</Text>
                <Text $size={22} $weight={500} $track={-0.4} $left={5}>Win</Text>
              </Row>
            </WinText>
          </WinCard>

          <StatsCard>
            <Row $height={30}><CardTitle $size={22.5} $face="Inter">Quotes</CardTitle></Row>
            <Row $height={32} $top={13}>
              <Text $size={19} $weight={500} $track={0.1}>Supplier</Text>
              <Push />
              <Row $height={32} $top={5}><Chip $width={52} $height={29} $tone="#3784ae"><Text $size={14} $track={-0.4}>+ 5.05</Text></Chip></Row>
            </Row>
            <Track $width={168} $height={5} $top={5} $tone="#d9cda7"><Fill $width={62} $tone="#f0921f" /></Track>
            <Row $height={34} $top={10}>
              <UpBadge />
              <Row $height={34} $top={1}><Text $size={18.5} $weight={500} $track={-0.7} $left={12}>Low</Text></Row>
              <Push />
              <Text $size={20} $weight={500} $track={0.5} $tone="#1b5b33">86 %</Text>
            </Row>
            <Rule $top={7} />
            <Row $height={50}><Text $size={18.5} $weight={500}>High Win Chance</Text></Row>
            <Rule />
            <Row $height={39} $top={8}>
              <div>
                <Row $height={28} $top={1}><Text $size={20.5} $weight={500} $track={0.9}>20%</Text></Row>
                <Track $width={86} $height={7} $top={3} $tone="transparent"><Fill $width={79} $tone="#3a8d49" /></Track>
              </div>
              <Push />
              <WinChanceNote>
                <Text $size={13.5} $track={-0.4} $tone="#24332e">Win Chance</Text>
                <Text $size={14.5} $track={0.4} $tone="#24332e">10%</Text>
              </WinChanceNote>
            </Row>
            <Rule $top={12} />
            <Row $height={53}>
              <Text $size={19} $weight={500} $track={0.1}>Compliance</Text>
              <Push />
              <Text $size={20} $weight={500} $track={0.8} $tone="#1b5b33">95%</Text>
            </Row>
          </StatsCard>

          <DisputeCard>
            <Row $height={31}>
              <Gap $width={1} />
              <CoinBadge />
              <Text $size={22} $weight={700} $track={0.5} $left={20}>6k</Text>
              <Push />
              <Text $size={19} $track={0.2} $tone="#4fb36e">Opon</Text>
            </Row>
            <Row $height={28} $top={6}>
              <Gap $width={1} />
              <Feathers />
              <Row $height={28} $top={2}><Text $size={16} $left={19} $tone="#dbe9f5">Spended</Text></Row>
            </Row>
            <Rule $top={6} $thick={2} $tone="#3a7fc2" $width={170} />
            <Row $height={50} $top={1}>
              <GrowthChart />
              <Text $size={22} $weight={600} $track={0.8} $left={18}>20%</Text>
              <Push />
              <Plant />
            </Row>
            <Rule $top={-1} $thick={2} $tone="#3879b9" $width={178} $left={-6} />
            <Row $height={62}>
              <Balloons />
              <div>
                <Row $height={24} $top={2}><Text $size={16.5} $track={-0.35} $left={13} $tone="#dbe9f5">Raise Dicpivte</Text></Row>
                <Row $height={18} $top={2} $left={19}><OrangeDart /></Row>
              </div>
            </Row>
            <Row $height={46} $top={-1}>
              <ActionButton $width={169} $height={46} $radius={11}><Text $size={20.5} $weight={500} $left={-2}>Raise Dispute</Text></ActionButton>
            </Row>
          </DisputeCard>
        </Column>
      </Board>
    </Page>
  );
}
